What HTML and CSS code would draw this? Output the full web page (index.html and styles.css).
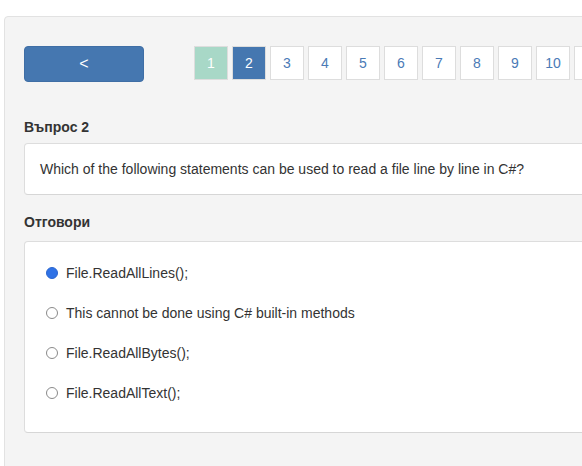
FILE: index.html
```html
<!DOCTYPE html>
<html lang="bg">
<head>
<meta charset="utf-8">
<title>Въпрос 2</title>
<link rel="stylesheet" href="styles.css">
</head>
<body>
<div class="panel">
  <div class="nav-row">
    <button class="back-btn" type="button">&lt;</button>
    <ul class="pager">
      <li class="page done">1</li>
      <li class="page current">2</li>
      <li class="page">3</li>
      <li class="page">4</li>
      <li class="page">5</li>
      <li class="page">6</li>
      <li class="page">7</li>
      <li class="page">8</li>
      <li class="page">9</li>
      <li class="page">10</li>
      <li class="page">11</li>
    </ul>
  </div>
  <h4 class="label first">Въпрос 2</h4>
  <div class="box question">Which of the following statements can be used to read a file line by line in C#?</div>
  <h4 class="label second">Отговори</h4>
  <div class="box answers">
    <label class="answer"><input type="radio" name="a" checked><span>File.ReadAllLines();</span></label>
    <label class="answer"><input type="radio" name="a"><span>This cannot be done using C# built-in methods</span></label>
    <label class="answer"><input type="radio" name="a"><span>File.ReadAllBytes();</span></label>
    <label class="answer"><input type="radio" name="a"><span>File.ReadAllText();</span></label>
  </div>
</div>
</body>
</html>
```
FILE: styles.css
```css
html, body {
  margin: 0;
  padding: 0;
  background: #ffffff;
  overflow: hidden;
  width: 582px;
  height: 466px;
}
body {
  font-family: "Liberation Sans", Arial, sans-serif;
  font-size: 14px;
  color: #333333;
}
.panel {
  margin: 16px 0 0 4px;
  width: 660px;
  min-height: 520px;
  box-sizing: border-box;
  background: #f4f4f4;
  border: 1px solid #e2e2e2;
  border-radius: 4px;
  padding: 29px 0 0 19px;
}
.nav-row {
  display: flex;
  align-items: flex-start;
  gap: 50px;
  height: 36px;
}
.back-btn {
  width: 120px;
  height: 36px;
  box-sizing: border-box;
  background: #4577b0;
  border: 1px solid #3f6ea5;
  border-radius: 4px;
  color: #ffffff;
  font-family: "Liberation Sans", Arial, sans-serif;
  font-size: 16px;
  padding: 0;
  line-height: 34px;
}
.pager {
  display: flex;
  gap: 4px;
  list-style: none;
  margin: 0;
  padding: 0;
}
.page {
  width: 34px;
  height: 34px;
  box-sizing: border-box;
  border: 1px solid #dddddd;
  background: #ffffff;
  color: #4a7ab6;
  display: flex;
  align-items: center;
  justify-content: center;
  font-size: 14px;
}
.page.done {
  background: #a8d8c7;
  color: #ffffff;
}
.page.current {
  background: #4577b0;
  color: #ffffff;
}
.label {
  margin: 0;
  font-size: 14px;
  font-weight: bold;
  line-height: 20px;
}
.label.first {
  margin-top: 35px;
  margin-bottom: 6px;
}
.label.second {
  margin-top: 17px;
  margin-bottom: 9px;
}
.box {
  background: #ffffff;
  border: 1px solid #dddddd;
  border-bottom-color: #d6d6d6;
  border-radius: 4px;
  box-sizing: border-box;
}
.question {
  padding: 15px 15px 15px 15px;
  line-height: 20px;
}
.answers {
  padding: 11px 0 19px 20px;
  display: flex;
  flex-direction: column;
}
.answer {
  display: flex;
  align-items: center;
  height: 40px;
}
.answer input {
  appearance: none;
  -webkit-appearance: none;
  width: 12px;
  height: 12px;
  margin: 0 8px 0 1px;
  border: 1px solid #8a8a8a;
  border-radius: 50%;
  background: #ffffff;
  box-sizing: border-box;
}
.answer input:checked {
  background: #2f72e6;
  border-color: #2b66cf;
}
```
